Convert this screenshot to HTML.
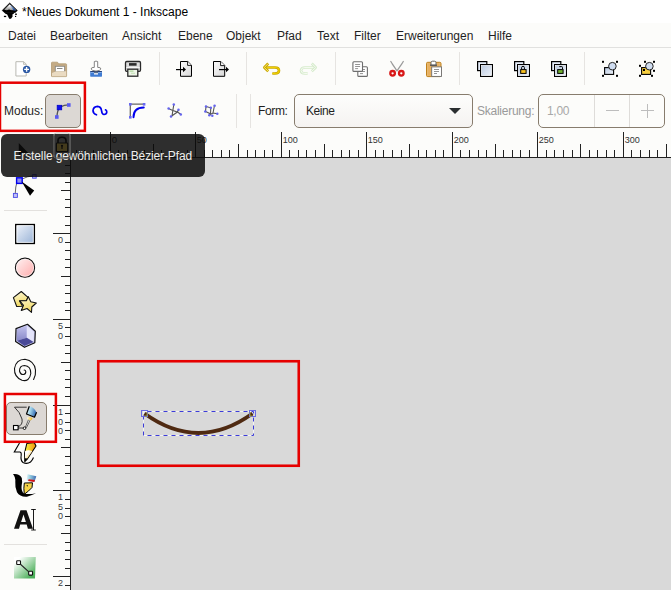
<!DOCTYPE html><html><head><meta charset="utf-8"><style>
*{margin:0;padding:0;box-sizing:border-box}
html,body{width:671px;height:590px;overflow:hidden;background:#fcfcfa;font-family:"Liberation Sans",sans-serif;color:#1f1f1f}
.a{position:absolute}
.t{position:absolute;white-space:nowrap;font-size:12px;line-height:14px}
.sep{position:absolute;width:1px;background:#e6e4e1}
svg{position:absolute;overflow:visible}
</style></head><body>
<div class="a" style="left:0;top:0;width:671px;height:23px;background:#fff"></div>
<div class="a" style="left:0;top:23px;width:671px;height:24px;background:#fcfcfa"></div>
<div class="a" style="left:0;top:47px;width:671px;height:1px;background:#e1e1df"></div>
<div class="t" style="left:22px;top:5px;color:#000">*Neues Dokument 1 - Inkscape</div>
<div class="t" style="left:8px;top:29px">Datei</div>
<div class="t" style="left:50px;top:29px">Bearbeiten</div>
<div class="t" style="left:122px;top:29px">Ansicht</div>
<div class="t" style="left:178px;top:29px">Ebene</div>
<div class="t" style="left:226px;top:29px">Objekt</div>
<div class="t" style="left:277px;top:29px">Pfad</div>
<div class="t" style="left:317px;top:29px">Text</div>
<div class="t" style="left:354px;top:29px">Filter</div>
<div class="t" style="left:396px;top:29px">Erweiterungen</div>
<div class="t" style="left:488px;top:29px">Hilfe</div>
<div class="sep" style="left:159px;top:52px;height:33px"></div>
<div class="sep" style="left:246px;top:52px;height:33px"></div>
<div class="sep" style="left:335px;top:52px;height:33px"></div>
<div class="sep" style="left:459px;top:52px;height:33px"></div>
<div class="sep" style="left:584px;top:52px;height:33px"></div>
<div class="sep" style="left:236px;top:94px;height:34px"></div>
<div class="sep" style="left:250px;top:94px;height:34px"></div>
<div class="a" style="left:71px;top:158px;width:600px;height:432px;background:#d9d9d9"></div>
<svg style="left:0;top:0" width="671" height="590"><rect x="70" y="157" width="601" height="1" fill="#222"/><rect x="70" y="158" width="1" height="432" fill="#222"/><rect x="76" y="150" width="1" height="7" fill="#222"/><rect x="84" y="150" width="1" height="7" fill="#222"/><rect x="93" y="150" width="1" height="7" fill="#222"/><rect x="101" y="150" width="1" height="7" fill="#222"/><rect x="110" y="132" width="1" height="25" fill="#222"/><text x="111.8" y="142.9" font-size="9.6" fill="#333" font-family="Liberation Sans">0</text><rect x="118" y="150" width="1" height="7" fill="#222"/><rect x="127" y="150" width="1" height="7" fill="#222"/><rect x="135" y="150" width="1" height="7" fill="#222"/><rect x="144" y="150" width="1" height="7" fill="#222"/><rect x="153" y="144" width="1" height="13" fill="#222"/><rect x="161" y="150" width="1" height="7" fill="#222"/><rect x="170" y="150" width="1" height="7" fill="#222"/><rect x="178" y="150" width="1" height="7" fill="#222"/><rect x="187" y="150" width="1" height="7" fill="#222"/><rect x="195" y="132" width="1" height="25" fill="#222"/><text x="196.8" y="142.9" font-size="9.6" fill="#333" textLength="10.1" lengthAdjust="spacingAndGlyphs" font-family="Liberation Sans">50</text><rect x="204" y="150" width="1" height="7" fill="#222"/><rect x="212" y="150" width="1" height="7" fill="#222"/><rect x="221" y="150" width="1" height="7" fill="#222"/><rect x="229" y="150" width="1" height="7" fill="#222"/><rect x="238" y="144" width="1" height="13" fill="#222"/><rect x="247" y="150" width="1" height="7" fill="#222"/><rect x="255" y="150" width="1" height="7" fill="#222"/><rect x="264" y="150" width="1" height="7" fill="#222"/><rect x="272" y="150" width="1" height="7" fill="#222"/><rect x="281" y="132" width="1" height="25" fill="#222"/><text x="282.8" y="142.9" font-size="9.6" fill="#333" textLength="15.1" lengthAdjust="spacingAndGlyphs" font-family="Liberation Sans">100</text><rect x="289" y="150" width="1" height="7" fill="#222"/><rect x="298" y="150" width="1" height="7" fill="#222"/><rect x="306" y="150" width="1" height="7" fill="#222"/><rect x="315" y="150" width="1" height="7" fill="#222"/><rect x="324" y="144" width="1" height="13" fill="#222"/><rect x="332" y="150" width="1" height="7" fill="#222"/><rect x="341" y="150" width="1" height="7" fill="#222"/><rect x="349" y="150" width="1" height="7" fill="#222"/><rect x="358" y="150" width="1" height="7" fill="#222"/><rect x="366" y="132" width="1" height="25" fill="#222"/><text x="367.8" y="142.9" font-size="9.6" fill="#333" textLength="15.1" lengthAdjust="spacingAndGlyphs" font-family="Liberation Sans">150</text><rect x="375" y="150" width="1" height="7" fill="#222"/><rect x="383" y="150" width="1" height="7" fill="#222"/><rect x="392" y="150" width="1" height="7" fill="#222"/><rect x="401" y="150" width="1" height="7" fill="#222"/><rect x="409" y="144" width="1" height="13" fill="#222"/><rect x="418" y="150" width="1" height="7" fill="#222"/><rect x="426" y="150" width="1" height="7" fill="#222"/><rect x="435" y="150" width="1" height="7" fill="#222"/><rect x="443" y="150" width="1" height="7" fill="#222"/><rect x="452" y="132" width="1" height="25" fill="#222"/><text x="453.8" y="142.9" font-size="9.6" fill="#333" textLength="15.1" lengthAdjust="spacingAndGlyphs" font-family="Liberation Sans">200</text><rect x="460" y="150" width="1" height="7" fill="#222"/><rect x="469" y="150" width="1" height="7" fill="#222"/><rect x="478" y="150" width="1" height="7" fill="#222"/><rect x="486" y="150" width="1" height="7" fill="#222"/><rect x="495" y="144" width="1" height="13" fill="#222"/><rect x="503" y="150" width="1" height="7" fill="#222"/><rect x="512" y="150" width="1" height="7" fill="#222"/><rect x="520" y="150" width="1" height="7" fill="#222"/><rect x="529" y="150" width="1" height="7" fill="#222"/><rect x="537" y="132" width="1" height="25" fill="#222"/><text x="538.8" y="142.9" font-size="9.6" fill="#333" textLength="15.1" lengthAdjust="spacingAndGlyphs" font-family="Liberation Sans">250</text><rect x="546" y="150" width="1" height="7" fill="#222"/><rect x="554" y="150" width="1" height="7" fill="#222"/><rect x="563" y="150" width="1" height="7" fill="#222"/><rect x="572" y="150" width="1" height="7" fill="#222"/><rect x="580" y="144" width="1" height="13" fill="#222"/><rect x="589" y="150" width="1" height="7" fill="#222"/><rect x="597" y="150" width="1" height="7" fill="#222"/><rect x="606" y="150" width="1" height="7" fill="#222"/><rect x="614" y="150" width="1" height="7" fill="#222"/><rect x="623" y="132" width="1" height="25" fill="#222"/><text x="624.8" y="142.9" font-size="9.6" fill="#333" textLength="15.1" lengthAdjust="spacingAndGlyphs" font-family="Liberation Sans">300</text><rect x="631" y="150" width="1" height="7" fill="#222"/><rect x="640" y="150" width="1" height="7" fill="#222"/><rect x="649" y="150" width="1" height="7" fill="#222"/><rect x="657" y="150" width="1" height="7" fill="#222"/><rect x="666" y="144" width="1" height="13" fill="#222"/><rect x="65" y="165" width="5" height="1" fill="#222"/><rect x="65" y="173" width="5" height="1" fill="#222"/><rect x="65" y="182" width="5" height="1" fill="#222"/><rect x="61" y="190" width="9" height="1" fill="#222"/><rect x="65" y="199" width="5" height="1" fill="#222"/><rect x="65" y="207" width="5" height="1" fill="#222"/><rect x="65" y="216" width="5" height="1" fill="#222"/><rect x="65" y="225" width="5" height="1" fill="#222"/><rect x="53" y="233" width="17" height="1" fill="#222"/><text x="58" y="243.0" font-size="9" fill="#3a3a3a" font-family="Liberation Sans">0</text><rect x="65" y="242" width="5" height="1" fill="#222"/><rect x="65" y="250" width="5" height="1" fill="#222"/><rect x="65" y="259" width="5" height="1" fill="#222"/><rect x="65" y="267" width="5" height="1" fill="#222"/><rect x="61" y="276" width="9" height="1" fill="#222"/><rect x="65" y="285" width="5" height="1" fill="#222"/><rect x="65" y="293" width="5" height="1" fill="#222"/><rect x="65" y="302" width="5" height="1" fill="#222"/><rect x="65" y="310" width="5" height="1" fill="#222"/><rect x="53" y="319" width="17" height="1" fill="#222"/><text x="58" y="329.0" font-size="9" fill="#3a3a3a" font-family="Liberation Sans">5</text><text x="58" y="338.6" font-size="9" fill="#3a3a3a" font-family="Liberation Sans">0</text><rect x="65" y="327" width="5" height="1" fill="#222"/><rect x="65" y="336" width="5" height="1" fill="#222"/><rect x="65" y="345" width="5" height="1" fill="#222"/><rect x="65" y="353" width="5" height="1" fill="#222"/><rect x="61" y="362" width="9" height="1" fill="#222"/><rect x="65" y="370" width="5" height="1" fill="#222"/><rect x="65" y="379" width="5" height="1" fill="#222"/><rect x="65" y="387" width="5" height="1" fill="#222"/><rect x="65" y="396" width="5" height="1" fill="#222"/><rect x="53" y="405" width="17" height="1" fill="#222"/><text x="58" y="415.0" font-size="9" fill="#3a3a3a" font-family="Liberation Sans">1</text><text x="58" y="424.6" font-size="9" fill="#3a3a3a" font-family="Liberation Sans">0</text><text x="58" y="434.2" font-size="9" fill="#3a3a3a" font-family="Liberation Sans">0</text><rect x="65" y="413" width="5" height="1" fill="#222"/><rect x="65" y="422" width="5" height="1" fill="#222"/><rect x="65" y="430" width="5" height="1" fill="#222"/><rect x="65" y="439" width="5" height="1" fill="#222"/><rect x="61" y="447" width="9" height="1" fill="#222"/><rect x="65" y="456" width="5" height="1" fill="#222"/><rect x="65" y="465" width="5" height="1" fill="#222"/><rect x="65" y="473" width="5" height="1" fill="#222"/><rect x="65" y="482" width="5" height="1" fill="#222"/><rect x="53" y="490" width="17" height="1" fill="#222"/><text x="58" y="500.0" font-size="9" fill="#3a3a3a" font-family="Liberation Sans">1</text><text x="58" y="509.6" font-size="9" fill="#3a3a3a" font-family="Liberation Sans">5</text><text x="58" y="519.2" font-size="9" fill="#3a3a3a" font-family="Liberation Sans">0</text><rect x="65" y="499" width="5" height="1" fill="#222"/><rect x="65" y="508" width="5" height="1" fill="#222"/><rect x="65" y="516" width="5" height="1" fill="#222"/><rect x="65" y="525" width="5" height="1" fill="#222"/><rect x="61" y="533" width="9" height="1" fill="#222"/><rect x="65" y="542" width="5" height="1" fill="#222"/><rect x="65" y="550" width="5" height="1" fill="#222"/><rect x="65" y="559" width="5" height="1" fill="#222"/><rect x="65" y="568" width="5" height="1" fill="#222"/><rect x="53" y="576" width="17" height="1" fill="#222"/><text x="58" y="586.0" font-size="9" fill="#3a3a3a" font-family="Liberation Sans">2</text><text x="58" y="595.6" font-size="9" fill="#3a3a3a" font-family="Liberation Sans">0</text><text x="58" y="605.2" font-size="9" fill="#3a3a3a" font-family="Liberation Sans">0</text><rect x="65" y="585" width="5" height="1" fill="#222"/></svg>
<div class="t" style="left:4px;top:104px">Modus:</div>
<div class="a" style="left:45px;top:94px;width:36px;height:34px;border:1px solid #877c6d;border-radius:5px;background:#dcd8d4"></div>
<div class="t" style="left:258px;top:104px;letter-spacing:-0.35px">Form:</div>
<div class="a" style="left:294px;top:94px;width:179px;height:34px;border:1px solid #877c6d;border-radius:5px;background:linear-gradient(#fdfdfc,#f5f3f1)"></div>
<div class="t" style="left:306px;top:104px;letter-spacing:-0.45px">Keine</div>
<svg style="left:449px;top:108px" width="12" height="6"><path d="M0 0H12L6 6Z" fill="#2a2e30"/></svg>
<div class="t" style="left:477px;top:104px;color:#9a9a9a;letter-spacing:-0.25px">Skalierung:</div>
<div class="a" style="left:538px;top:94px;width:127px;height:34px;border:1px solid #877c6d;border-radius:5px;background:#fcfcfa"></div>
<div class="sep" style="left:594px;top:95px;height:32px;background:#dedcd9"></div>
<div class="sep" style="left:629px;top:95px;height:32px;background:#dedcd9"></div>
<div class="t" style="left:547px;top:104px;color:#a8a8a8;letter-spacing:-0.3px">1,00</div>
<div class="a" style="left:606px;top:110px;width:13px;height:1px;background:#bdbdbd"></div>
<div class="a" style="left:641px;top:110px;width:13px;height:1px;background:#bdbdbd"></div>
<div class="a" style="left:647px;top:104px;width:1px;height:14px;background:#bdbdbd"></div>
<div class="a" style="left:4px;top:210px;width:43px;height:1px;background:#e3e1de"></div>
<div class="a" style="left:4px;top:544px;width:43px;height:1px;background:#e3e1de"></div>
<div class="a" style="left:6px;top:402px;width:41px;height:33px;border:1px solid #877c6d;border-radius:5px;background:#dcd8d4"></div>
<svg style="left:0;top:0" width="671" height="590"><rect x="143.5" y="411.5" width="110" height="24" fill="none" stroke="#f4f4f4" stroke-width="1"/><rect x="143.5" y="411.5" width="110" height="24" fill="none" stroke="#3c3cd8" stroke-width="1" stroke-dasharray="4 4" stroke-dashoffset="4"/><path d="M144.5 413.5 Q198.5 452.4 252.5 413.5" fill="none" stroke="#4f2a12" stroke-width="3.9"/><rect x="141.5" y="410.5" width="6" height="6" fill="none" stroke="#6b6be0" stroke-width="1"/><path d="M145 416 L147 416 L147 412.5" fill="none" stroke="#9a9a30" stroke-width="1"/><rect x="249.5" y="410.5" width="6" height="6" fill="none" stroke="#6b6be0" stroke-width="1"/><path d="M250 412.5 L250 416 L252 416" fill="none" stroke="#9a9a30" stroke-width="1"/></svg>
<svg style="left:0px;top:0px" width="22" height="22" viewBox="0 0 22 22"><defs><linearGradient id="lgw" x1="0" y1="0" x2="0" y2="1"><stop offset="0.2" stop-color="#fff"/><stop offset="1" stop-color="#8a8a8a"/></linearGradient><linearGradient id="lgblue" x1="0" y1="0" x2="1" y2="1"><stop offset="0" stop-color="#c0d0f0"/><stop offset="0.6" stop-color="#3060b0"/><stop offset="1" stop-color="#1a3060"/></linearGradient></defs><path d="M9.7 3 L2.2 10.4 L4.3 12.5 H15.2 L17.4 10.5 Z" fill="#000" stroke="#000" stroke-width="0.6" stroke-linejoin="round"/><path d="M9.7 4.2 L4.2 9.8 Q7 10.6 9 9.6 Q11 10.4 13.6 10.1 L16.4 10.3 Z" fill="url(#lgw)"/><path d="M10.4 4.9 L16.4 10.4 L13.6 10.7 Q12.8 8 10.3 6.2 Z" fill="url(#lgblue)"/><path d="M4.5 12.2 H14.8 L13.6 13.8 L12.4 14.6 L12.6 16.6 L11 18.7 L9.2 18.7 L8 16.2 L7.2 14.6 L5 13.6 Z" fill="#000"/><rect x="3.9" y="15.8" width="2.3" height="1.3" fill="#000"/><rect x="15" y="13.6" width="2" height="1.2" fill="#000"/><rect x="15" y="15.9" width="1.2" height="1.1" fill="#000"/></svg>
<svg style="left:12px;top:58px" width="22" height="22" viewBox="0 0 22 22"><path d="M3.9 3.7 H11.8 L14.2 6.1 V18 H3.9 Z" fill="#fff" stroke="#b9b9b2" stroke-width="1"/><path d="M11.5 4 V6.4 H14" fill="#e8e8e4" stroke="#b9b9b2" stroke-width="0.8"/><circle cx="14.6" cy="11.4" r="3.7" fill="#2a58a4"/><path d="M14.6 9 V13.8 M12.2 11.4 H17" stroke="#fff" stroke-width="1.4"/></svg>
<svg style="left:48px;top:58px" width="22" height="22" viewBox="0 0 22 22"><path d="M3.5 5 Q3.5 4.2 4.3 4.2 H9.5 L10.6 5.8 H17.8 Q18.6 5.8 18.6 6.6 V18 Q18.6 18.6 18 18.6 H4.1 Q3.5 18.6 3.5 18 Z" fill="#c4ab85" stroke="#b39a72" stroke-width="0.8"/><rect x="7.3" y="8.3" width="9.3" height="5.5" fill="#fff" stroke="#8a8a86" stroke-width="0.9"/><rect x="9" y="10" width="5.5" height="1" fill="#8a8a86"/><path d="M4 15 L8 13.3 H18.2 V18.2 H4 Z" fill="#eadbc2"/></svg>
<svg style="left:86px;top:58px" width="22" height="22" viewBox="0 0 22 22"><rect x="4.2" y="12.9" width="11.8" height="5.8" rx="0.6" fill="#3f7bd2"/><rect x="4.4" y="13.1" width="11.4" height="0.9" fill="#22386a"/><rect x="4.6" y="14.1" width="11" height="0.8" fill="#8fb6ea"/><rect x="8" y="15.1" width="4" height="1.4" fill="#fff"/><rect x="8" y="14.5" width="4" height="0.6" fill="#333"/><path d="M8.3 3.6 Q10 2.6 11.7 3.6 V9.4 Q15 9.2 14.9 11 Q14.6 12.6 10 13.1 Q5.4 12.6 5.1 11 Q5 9.2 8.3 9.4 Z" fill="#fff" stroke="#777" stroke-width="0.9"/></svg>
<svg style="left:122px;top:58px" width="22" height="22" viewBox="0 0 22 22"><rect x="3.5" y="3.5" width="15" height="9.8" rx="1.2" fill="#dcdcdc" stroke="#2a2a2a" stroke-width="1.3"/><rect x="7" y="5.1" width="7.6" height="2.6" fill="#2a2a2a"/><rect x="4.3" y="9" width="13.4" height="1.2" fill="#f4f4f4"/><rect x="5.8" y="11.2" width="10" height="7" fill="#eef5e8" stroke="#2a2a2a" stroke-width="1.3"/><rect x="7.5" y="12.6" width="4" height="1" fill="#9fd08a"/><rect x="9" y="14.8" width="4" height="0.8" fill="#b8dca8"/></svg>
<svg style="left:173px;top:58px" width="22" height="22" viewBox="0 0 22 22"><defs><linearGradient id="lgp" x1="0" y1="0" x2="1" y2="1"><stop offset="0" stop-color="#fafafa"/><stop offset="1" stop-color="#d8d8d8"/></linearGradient></defs><path d="M7.5 3.5 H14.8 L18.5 7.2 V18.3 H7.5 Z" fill="url(#lgp)" stroke="#000" stroke-width="1"/><path d="M14.6 3.6 V7.4 H18.4" fill="#fff" stroke="#000" stroke-width="0.9"/><path d="M3 11.6 H10.5" stroke="#000" stroke-width="1.2"/><path d="M10 8.8 L13 11.6 L10 14.2 Z" fill="#000"/></svg>
<svg style="left:210px;top:58px" width="22" height="22" viewBox="0 0 22 22"><path d="M3.5 3.5 H10.8 L14.7 7.4 V18.3 H3.5 Z" fill="url(#lgp)" stroke="#000" stroke-width="1"/><path d="M10.6 3.6 V7.6 H14.6" fill="#fff" stroke="#000" stroke-width="0.9"/><path d="M9 11.6 H16.5" stroke="#000" stroke-width="1.2"/><path d="M16 8.8 L19 11.6 L16 14.2 Z" fill="#000"/></svg>
<svg style="left:260px;top:58px" width="22" height="22" viewBox="0 0 22 22"><path d="M6 9.5 H15 Q19 9.5 19 12.5 Q19 15.5 15 15.5 H12.3" fill="none" stroke="#c9a700" stroke-width="2.6"/><path d="M6 9.5 H15 Q19 9.5 19 12.5 Q19 15.5 15 15.5 H12.3" fill="none" stroke="#f0d000" stroke-width="1.2"/><path d="M8.2 5.5 L4.3 9.5 L8.2 13.2" fill="none" stroke="#c9a700" stroke-width="2.6" stroke-linejoin="round"/><path d="M8.2 5.5 L4.3 9.5 L8.2 13.2" fill="none" stroke="#f8e870" stroke-width="1" stroke-linejoin="round"/></svg>
<svg style="left:298px;top:58px" width="22" height="22" viewBox="0 0 22 22"><path d="M16 9.5 H7 Q3 9.5 3 12.5 Q3 15.5 7 15.5 H9.7" fill="none" stroke="#d6ebcc" stroke-width="2.6"/><path d="M16 9.5 H7 Q3 9.5 3 12.5 Q3 15.5 7 15.5 H9.7" fill="none" stroke="#f4faf0" stroke-width="1"/><path d="M13.8 5.5 L17.7 9.5 L13.8 13.2" fill="none" stroke="#d6ebcc" stroke-width="2.6" stroke-linejoin="round"/><path d="M13.8 5.5 L17.7 9.5 L13.8 13.2" fill="none" stroke="#f4faf0" stroke-width="1" stroke-linejoin="round"/></svg>
<svg style="left:349px;top:58px" width="22" height="22" viewBox="0 0 22 22"><rect x="8.8" y="8.8" width="9.6" height="9.6" rx="1" fill="#fff" stroke="#6e6e6e" stroke-width="1.1"/><rect x="11.0" y="11.0" width="5" height="0.9" fill="#888"/><rect x="11.0" y="13.100000000000001" width="5" height="0.9" fill="#888"/><rect x="11.0" y="15.200000000000001" width="3" height="0.9" fill="#888"/><rect x="3.9" y="3.8" width="9.6" height="9.6" rx="1" fill="#fff" stroke="#6e6e6e" stroke-width="1.1"/><rect x="6.1" y="6.0" width="5" height="0.9" fill="#888"/><rect x="6.1" y="8.1" width="5" height="0.9" fill="#888"/><rect x="6.1" y="10.2" width="3" height="0.9" fill="#888"/></svg>
<svg style="left:386px;top:58px" width="22" height="22" viewBox="0 0 22 22"><path d="M4.8 3.5 L11 12.8 L6.2 5.8 Z M17.3 3.5 L11 12.8 L15.8 5.8 Z" fill="#fff" stroke="#9a9a9a" stroke-width="1.2" stroke-linejoin="round"/><circle cx="6.6" cy="15.3" r="2.3" fill="none" stroke="#d81818" stroke-width="2.3"/><circle cx="15.3" cy="15.3" r="2.3" fill="none" stroke="#d81818" stroke-width="2.3"/></svg>
<svg style="left:423px;top:58px" width="22" height="22" viewBox="0 0 22 22"><rect x="3.5" y="4.3" width="14.5" height="14.3" rx="1.2" fill="#e6b870" stroke="#c0801a" stroke-width="1"/><rect x="5" y="5.5" width="11" height="12" fill="#e8b060"/><path d="M8 7.2 V4.6 Q8 3.2 9.5 3.2 H11.5 Q13 3.2 13 4.6 V7.2 Z" fill="#fff" stroke="#666" stroke-width="1"/><rect x="7" y="6.6" width="7" height="1.3" fill="#555"/><rect x="8.7" y="8.9" width="9.8" height="9.5" fill="#fff" stroke="#6e6e6e" stroke-width="0.9"/><rect x="11" y="11" width="5" height="0.9" fill="#888"/><rect x="11" y="13" width="5" height="0.9" fill="#888"/><rect x="11" y="15" width="3" height="0.9" fill="#888"/></svg>
<svg style="left:474px;top:58px" width="22" height="22" viewBox="0 0 22 22"><defs><linearGradient id="lgb" x1="0" y1="0" x2="1" y2="1"><stop offset="0" stop-color="#b8c8e0"/><stop offset="1" stop-color="#f0f4fa"/></linearGradient></defs><rect x="3.6" y="3.6" width="9.2" height="9" fill="#e6eefa" stroke="#000" stroke-width="1.2"/><rect x="6.6" y="6.6" width="11.8" height="11.8" fill="url(#lgb)" stroke="#000" stroke-width="1.2"/><rect x="7.5" y="7.5" width="10" height="10" fill="none" stroke="#fff" stroke-width="0.6"/></svg>
<svg style="left:511px;top:58px" width="22" height="22" viewBox="0 0 22 22"><rect x="3.6" y="3.6" width="9.2" height="9" fill="#e6eefa" stroke="#000" stroke-width="1.2"/><rect x="6.6" y="6.6" width="11.8" height="11.8" fill="url(#lgb)" stroke="#000" stroke-width="1.2"/><rect x="7.5" y="7.5" width="10" height="10" fill="none" stroke="#fff" stroke-width="0.6"/><path d="M10.6 11.5 V9.6 Q10.6 8.3 12 8.3 Q13.4 8.3 13.4 9.6 V11.5" fill="none" stroke="#000" stroke-width="1"/><rect x="9.7" y="11.6" width="5.4" height="3.8" fill="#f8c020" stroke="#000" stroke-width="1"/></svg>
<svg style="left:548px;top:58px" width="22" height="22" viewBox="0 0 22 22"><rect x="3.6" y="3.6" width="9.2" height="9" fill="#e6eefa" stroke="#000" stroke-width="1.2"/><rect x="6.6" y="6.6" width="11.8" height="11.8" fill="url(#lgb)" stroke="#000" stroke-width="1.2"/><rect x="7.5" y="7.5" width="10" height="10" fill="none" stroke="#fff" stroke-width="0.6"/><path d="M11.3 8.6 H13.8 Q14.5 8.6 14.5 9.5 V11" fill="none" stroke="#000" stroke-width="1"/><rect x="9.7" y="11.6" width="5.4" height="3.8" fill="#70b030" stroke="#000" stroke-width="1"/></svg>
<svg style="left:599px;top:58px" width="22" height="22" viewBox="0 0 22 22"><rect x="3" y="2.8" width="2" height="2" fill="#000"/><rect x="17" y="2.8" width="2" height="2" fill="#000"/><rect x="3" y="16.8" width="2" height="2" fill="#000"/><rect x="17" y="16.8" width="2" height="2" fill="#000"/><rect x="5.6" y="9.6" width="9" height="6.8" fill="url(#lgb)" stroke="#000" stroke-width="1.1"/><circle cx="13.4" cy="8.2" r="3.8" fill="#d0ddf0" stroke="#222" stroke-width="1"/></svg>
<svg style="left:636px;top:58px" width="22" height="22" viewBox="0 0 22 22"><rect x="8" y="2.8" width="2" height="2" fill="#000"/><rect x="17" y="2.8" width="2" height="2" fill="#000"/><rect x="3" y="6.8" width="2" height="2" fill="#000"/><rect x="17" y="11.8" width="2" height="2" fill="#000"/><rect x="8" y="11.8" width="2" height="2" fill="#000"/><rect x="3" y="16.8" width="2" height="2" fill="#000"/><rect x="15" y="16.8" width="2" height="2" fill="#000"/><rect x="5.6" y="9.6" width="9" height="6.8" fill="#f8d040" stroke="#000" stroke-width="1.1"/><rect x="7" y="11" width="2" height="2" fill="#000"/><circle cx="13.4" cy="8.2" r="3.8" fill="#d0ddf0" stroke="#222" stroke-width="1"/></svg>
<svg style="left:50px;top:100px" width="26" height="22" viewBox="0 0 26 22"><path d="M7 17 Q7 11 9.5 8" fill="none" stroke="#555" stroke-width="1.3"/><path d="M11 6.8 Q14 4.8 18.5 4.8" fill="none" stroke="#555" stroke-width="1.3"/><rect x="7.2" y="5.3" width="4.5" height="4.5" fill="#1010e8" stroke="#0000cc" stroke-width="0.8"/><rect x="17" y="3.2" width="3.6" height="3.6" fill="#5858f0"/><rect x="5" y="15.2" width="3.6" height="3.6" fill="#5858f0"/></svg>
<svg style="left:88px;top:100px" width="26" height="22" viewBox="0 0 26 22"><path d="M8.5 14.8 Q5 13.5 5 10.5 Q5.5 6.5 9.5 6.3 Q13 6.5 13.5 10.5 Q14 14.5 16 14.5 Q18.5 14.5 18.8 12 Q18.8 10.5 17.5 9.8" fill="none" stroke="#0000ee" stroke-width="1.7" stroke-linecap="round"/></svg>
<svg style="left:125px;top:100px" width="26" height="22" viewBox="0 0 26 22"><path d="M5.3 17.5 V4.2 H19" fill="none" stroke="#666" stroke-width="1.3"/><rect x="4" y="3" width="2.6" height="2.6" fill="#6868f0"/><rect x="17.8" y="3" width="2.6" height="2.6" fill="#6868f0"/><rect x="4" y="16" width="2.6" height="2.6" fill="#6868f0"/><path d="M8.5 17.2 Q8.5 7.5 18.8 7.5" fill="none" stroke="#0000ee" stroke-width="1.9" stroke-linecap="round"/></svg>
<svg style="left:162px;top:100px" width="26" height="22" viewBox="0 0 26 22"><path d="M11.8 4.5 L10 15.8 L15.5 12 L19 14.5 M6.5 8.5 L10.2 10.2 L15.3 12 L16.5 9.8" fill="none" stroke="#555" stroke-width="1.1"/><circle cx="11.8" cy="4.6" r="1.25" fill="#6464ee"/><circle cx="6.6" cy="8.6" r="1.25" fill="#6464ee"/><circle cx="9" cy="16.5" r="1.25" fill="#6464ee"/><circle cx="16.5" cy="9.8" r="1.25" fill="#6464ee"/><circle cx="18.8" cy="14.6" r="1.25" fill="#6464ee"/></svg>
<svg style="left:199px;top:100px" width="26" height="22" viewBox="0 0 26 22"><path d="M7 6.5 L11.8 7.8 L11.5 13.8 L6.5 11.5 Z M15.5 5.5 L14 13 L18.5 13.7 M10 15.2 L14 13" fill="none" stroke="#555" stroke-width="1.1"/><circle cx="7" cy="6.5" r="1.25" fill="#6464ee"/><circle cx="11.8" cy="7.8" r="1.25" fill="#6464ee"/><circle cx="6.3" cy="11.5" r="1.25" fill="#6464ee"/><circle cx="15.6" cy="5.7" r="1.25" fill="#6464ee"/><circle cx="18.3" cy="13.7" r="1.25" fill="#6464ee"/><circle cx="10.3" cy="15.2" r="1.25" fill="#6464ee"/><circle cx="13.3" cy="15.8" r="1.25" fill="#6464ee"/></svg>
<svg style="left:8px;top:136px" width="32" height="30" viewBox="0 0 32 30"><path d="M10.8 7 L10.8 20 L14 17.2 L20.5 17.2 Z" fill="#000"/></svg>
<svg style="left:8px;top:170px" width="32" height="30" viewBox="0 0 32 30"><path d="M7.2 24 Q7.5 16 9 12 M14 9 Q20 6 25 6" fill="none" stroke="#666" stroke-width="1"/><rect x="8.6" y="7.8" width="5.6" height="5.6" fill="#8e8ef0" stroke="#0000ee" stroke-width="1.4"/><rect x="24.6" y="4.6" width="3.6" height="3.6" fill="#c0c0f4" stroke="#4a4ae8" stroke-width="0.9"/><rect x="5.4" y="23.4" width="4" height="4" fill="#c0c0f4" stroke="#4a4ae8" stroke-width="0.9"/><path d="M13.6 11.6 L26.2 20.5 L22 25.8 Z" fill="#000"/></svg>
<svg style="left:10px;top:220px" width="30" height="30" viewBox="0 0 30 30"><defs><linearGradient id="lgr" x1="0" y1="0" x2="1" y2="1"><stop offset="0" stop-color="#f0f4fb"/><stop offset="1" stop-color="#98b2d6"/></linearGradient></defs><rect x="5.8" y="4.6" width="18.5" height="18.8" fill="url(#lgr)" stroke="#000" stroke-width="1.5"/><rect x="6.9" y="5.7" width="16.3" height="16.6" fill="none" stroke="#fff" stroke-width="0.8"/></svg>
<svg style="left:10px;top:254px" width="30" height="30" viewBox="0 0 30 30"><defs><linearGradient id="lgc" x1="0" y1="0" x2="1" y2="1"><stop offset="0" stop-color="#fff4f4"/><stop offset="1" stop-color="#ffaaaa"/></linearGradient></defs><circle cx="15" cy="13.7" r="9.6" fill="url(#lgc)" stroke="#111" stroke-width="1.1"/><circle cx="15" cy="13.7" r="8.6" fill="none" stroke="#fff" stroke-width="0.6"/></svg>
<svg style="left:10px;top:287px" width="30" height="30" viewBox="0 0 30 30"><defs><linearGradient id="lgs" x1="0" y1="0" x2="0.3" y2="1"><stop offset="0" stop-color="#fffbe0"/><stop offset="1" stop-color="#f0d860"/></linearGradient></defs><path d="M11.3 4.5 L3.4 10.6 L6.7 19.5 L12.5 19.2 L9.5 14 L16.5 13.5 L18 10.3 Z" fill="url(#lgs)" stroke="#111" stroke-width="1.1" stroke-linejoin="round"/><path d="M18.2 9.5 L16.5 13.6 L9.6 13.7 L13.5 18.3 L11.3 23.5 L17 21.5 L21.5 25.3 L21.8 20 L26.3 16 L20.8 14.8 Z" fill="url(#lgs)" stroke="#111" stroke-width="1.1" stroke-linejoin="round"/></svg>
<svg style="left:10px;top:320px" width="30" height="30" viewBox="0 0 30 30"><defs><linearGradient id="lgq" x1="0" y1="0" x2="0" y2="1"><stop offset="0" stop-color="#c0c0ec"/><stop offset="1" stop-color="#8888c8"/></linearGradient></defs><path d="M17.5 4.3 L25.3 11.2 L24.8 22.8 L14.5 27.3 L5.6 21.5 L6 8.6 Z" fill="#c8c8f0" stroke="#111" stroke-width="1.2" stroke-linejoin="round"/><path d="M7 9.3 L16.8 5.8 L16.8 17.8 L7 20.8 Z" fill="url(#lgq)"/><path d="M16.8 5.8 L24 12 L23.5 22 L16.8 17.8 Z" fill="#e4e4fa"/><path d="M7 20.8 L16.8 17.8 L23.5 22 L14.5 26 Z" fill="#4a4a98"/></svg>
<svg style="left:10px;top:355px" width="30" height="30" viewBox="0 0 30 30"><path d="M23.6 24.5 Q26 20 25.5 15 Q24.5 6 15 4.3 Q6 4.5 4.5 13.5 Q4 22 12 25.3 Q19.5 27 20.8 18.5 Q21 11 14.5 10.5 Q9.5 10.5 9.5 16 Q10.5 19.8 13.5 19.5 Q16 19 15.8 16.5 Q15.5 15 14.2 15" fill="none" stroke="#111" stroke-width="1.1" stroke-linecap="round"/></svg>
<svg style="left:8px;top:403px" width="36" height="32" viewBox="0 0 36 32"><defs><linearGradient id="lgpen" x1="0" y1="0" x2="1" y2="0.3"><stop offset="0.1" stop-color="#e4fafe"/><stop offset="0.5" stop-color="#9ccfe6"/><stop offset="1" stop-color="#3a70b4"/></linearGradient><linearGradient id="lgfer" x1="0" y1="0" x2="1" y2="0"><stop offset="0" stop-color="#fff8e0"/><stop offset="1" stop-color="#f0b818"/></linearGradient></defs><path d="M6.5 4.2 H18.7 M6.5 4.2 Q12 9 14 16 Q15 22 10 23.8 M10 25 H15.5" fill="none" stroke="#222" stroke-width="0.9"/><rect x="5.5" y="22.5" width="4.6" height="4.3" fill="#fff" stroke="#000" stroke-width="1.1"/><circle cx="16.5" cy="25.2" r="1.3" fill="#fff" stroke="#000" stroke-width="0.9"/><path d="M17.5 24 L21 15.5 L22.5 16.2 L18.5 24.5 Z" fill="#fff" stroke="#222" stroke-width="0.7"/><path d="M21.3 3.2 Q25.5 3.5 28.5 9.2 L26.5 14 L18.5 11 Z" fill="url(#lgpen)"/><path d="M21.3 3.2 L18.5 11 L26.5 14.2 L28.6 9.2" fill="none" stroke="#000" stroke-width="1.2" stroke-linejoin="round"/><path d="M19.2 14.2 Q22 13.8 24.4 15.1 Q24.4 17.1 22.5 17.4 Q20 17.1 19.1 15.8 Z" fill="url(#lgfer)"/></svg>
<svg style="left:10px;top:440px" width="30" height="30" viewBox="0 0 30 30"><defs><linearGradient id="lgpc" x1="0" y1="0" x2="1" y2="0"><stop offset="0.1" stop-color="#f8f040"/><stop offset="0.9" stop-color="#f09a10"/></linearGradient><linearGradient id="lgwood" x1="0" y1="0" x2="1" y2="1"><stop offset="0.3" stop-color="#fff"/><stop offset="1" stop-color="#f4c030"/></linearGradient></defs><path d="M9.5 3 L4.3 12 H10 Q11.5 12.3 11.2 15 Q10.3 20.5 13 22.5 Q17 24.5 20.5 22 Q22.5 20 23.5 17.5" fill="none" stroke="#000" stroke-width="1.1"/><path d="M16.8 3.5 L24.3 2.5 L26 6 L17.5 18.8 L14.8 21.5 L14.6 13 Z" fill="url(#lgpc)" stroke="#000" stroke-width="1.1" stroke-linejoin="round"/><path d="M15 11.2 Q18.5 9.3 22.3 11.3 L16.8 18.8 L15 19.5 Z" fill="url(#lgwood)"/><path d="M14.8 18.3 L17.6 18.6 L14.8 21.6 Z" fill="#000"/></svg>
<svg style="left:10px;top:470px" width="30" height="30" viewBox="0 0 30 30"><defs><linearGradient id="lgcal" x1="0" y1="0" x2="1" y2="0"><stop offset="0" stop-color="#e0f4f8"/><stop offset="0.4" stop-color="#90c8dc"/><stop offset="1" stop-color="#3a66b0"/></linearGradient></defs><path d="M3 4 Q9.5 3.3 11.8 8 Q12.6 12 11.6 16 Q11 21 14 23.6 Q19 24.8 26 23.2 Q21 25.5 17 26.7 Q10 27.2 7 22.3 Q4.8 17 5.3 12 Q5.6 7 3 4 Z" fill="#000"/><path d="M14.3 13 L22.5 12.8 L22 17.5 Q19 21 14.3 24.3 Q13.4 18 14.3 13 Z" fill="#f6d448" stroke="#000" stroke-width="1"/><path d="M16.6 15 L17.8 15 L17.2 17 Z" fill="#000"/><path d="M17.5 4.3 L26.3 6.2 L24.5 11.8 L16.5 10.5 Z" fill="url(#lgcal)"/><path d="M18.6 9.2 L24.9 10 L24.3 11.9 L18.1 10.9 Z" fill="#d81010"/></svg>
<svg style="left:10px;top:505px" width="30" height="30" viewBox="0 0 30 30"><path d="M4 23.8 L10.5 5.2 H16.5 L23 23.8 H17.9 L16.7 19.4 H10.2 L9 23.8 Z M11.1 16.9 H15.9 L13.5 9.6 Z" fill="#111" fill-rule="evenodd"/><path d="M23.5 4.5 V25 M21.2 4.5 H25.8 M21.2 25 H25.8" fill="none" stroke="#000" stroke-width="0.9"/></svg>
<svg style="left:10px;top:553px" width="30" height="30" viewBox="0 0 30 30"><defs><linearGradient id="lgcon" x1="0" y1="0" x2="1" y2="1"><stop offset="0.15" stop-color="#ffffff"/><stop offset="0.85" stop-color="#4caf5a"/></linearGradient></defs><path d="M4 4 H25.8 L25 25.5 H4 Z" fill="url(#lgcon)"/><path d="M8.5 9.5 L20.5 20.3" stroke="#222" stroke-width="1.1"/><rect x="6.7" y="7.7" width="3.8" height="3.8" rx="0.6" fill="#fff" stroke="#111" stroke-width="1.1"/><rect x="18.7" y="18.3" width="3.8" height="3.8" rx="0.6" fill="#fff" stroke="#111" stroke-width="1.1"/></svg>
<svg style="left:0;top:0" width="671" height="590"><rect x="0" y="82.7" width="84.9" height="48.15" fill="none" stroke="#e60000" stroke-width="2.5"/><rect x="4.9" y="394" width="51" height="47.8" fill="none" stroke="#e60000" stroke-width="2.5"/><rect x="98.25" y="361.25" width="200.5" height="104.5" fill="none" stroke="#e60000" stroke-width="2.6"/></svg>
<div class="a" style="left:1px;top:134px;width:204px;height:43px;border-radius:6px;background:rgba(12,12,12,0.86)"></div>
<div class="t" style="left:13.5px;top:149px;color:#eeeeec;letter-spacing:-0.13px">Erstelle gewöhnlichen Bézier-Pfad</div>
<svg style="left:50px;top:130px" width="24" height="26" viewBox="0 0 24 26"><defs><clipPath id="cl1"><rect x="0" y="4.2" width="24" height="30"/></clipPath></defs><rect x="3.7" y="3" width="16.5" height="25" rx="3" fill="none" stroke="#c9c7c3" stroke-width="1"/><rect x="3.7" y="3" width="16.5" height="25" rx="3" fill="none" stroke="#3a3a3a" stroke-width="1" clip-path="url(#cl1)"/><path d="M8 13.5 V10.5 Q8 7.2 12 7.2 Q16 7.2 16 10.5 V13.5" fill="none" stroke="#0a0a0a" stroke-width="1.6"/><rect x="6.4" y="13" width="11.3" height="8.6" rx="0.8" fill="#433a1c" stroke="#0c0c0c" stroke-width="1.1"/><circle cx="12" cy="15.8" r="1.1" fill="#0a0a0a"/><rect x="11.4" y="16.5" width="1.2" height="2.4" fill="#0a0a0a"/></svg>
</body></html>
